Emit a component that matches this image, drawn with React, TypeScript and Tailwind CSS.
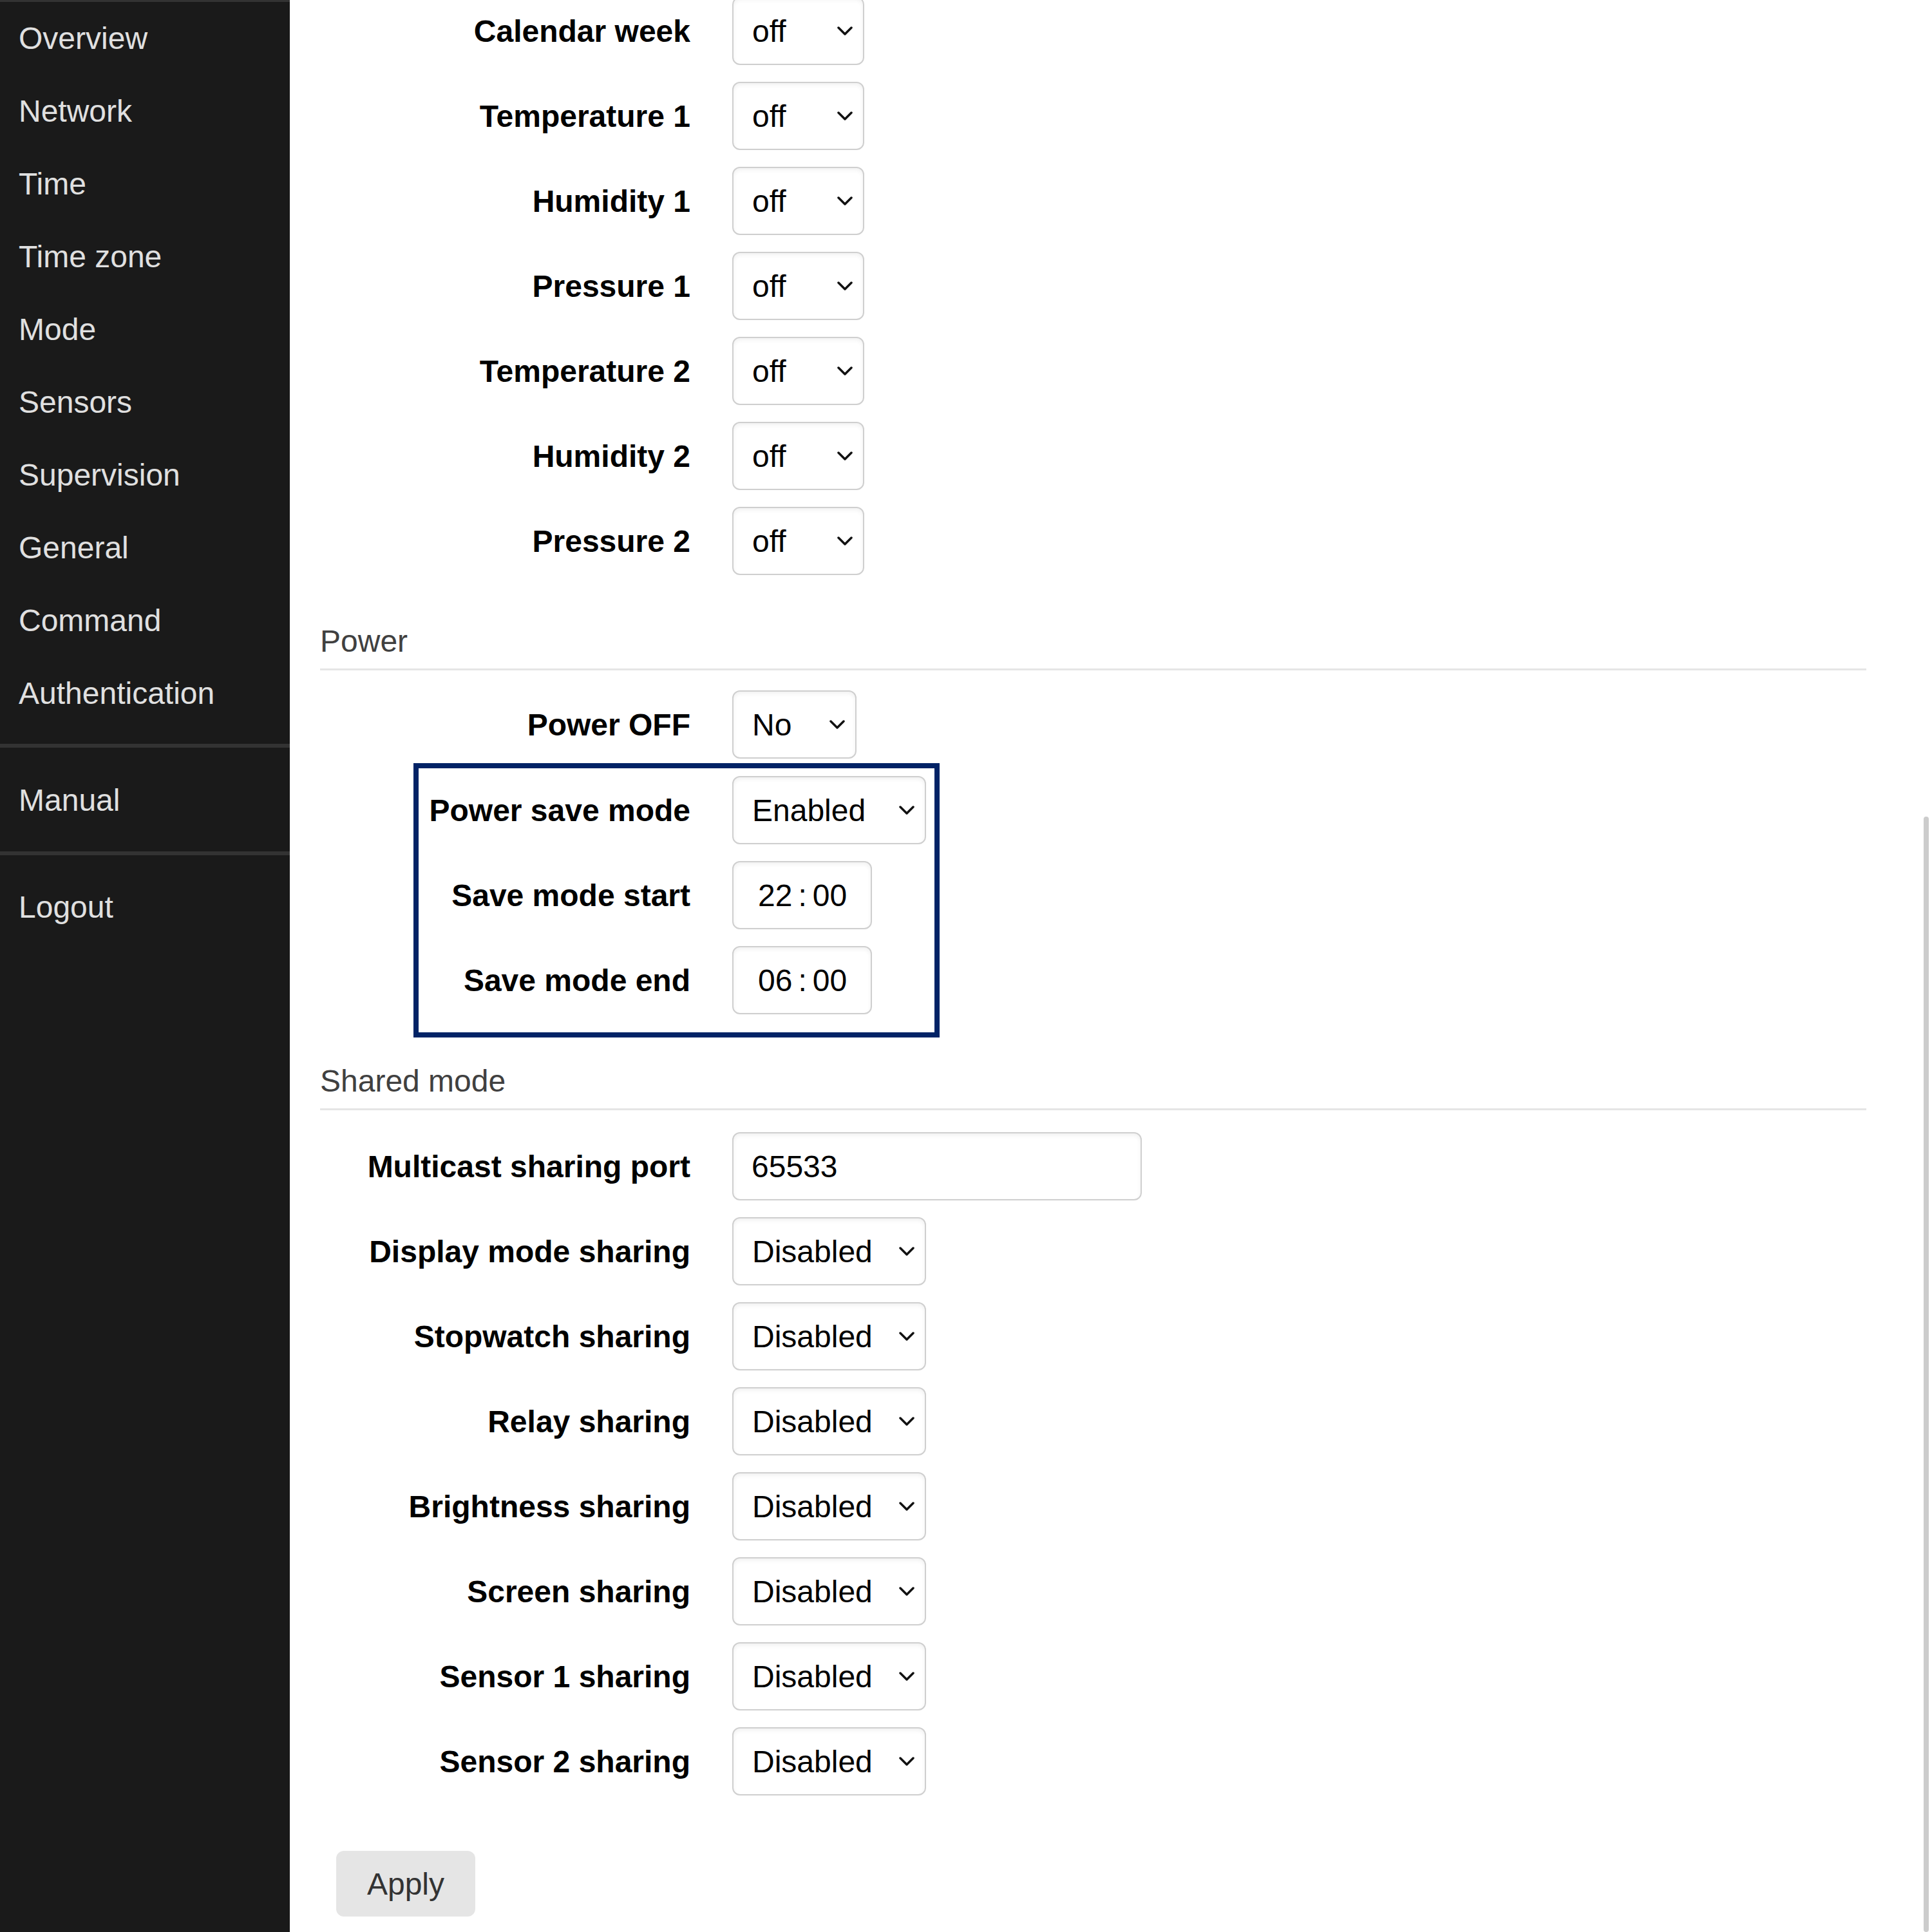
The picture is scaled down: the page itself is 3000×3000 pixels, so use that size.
import React from "react";

const FONT = "font-['Liberation_Sans',Arial,Helvetica,sans-serif]";

function Chevron() {
  return (
    <svg width="24" height="14" viewBox="0 0 24 14" className="shrink-0">
      <polyline points="2,2 12,12 22,2" fill="none" stroke="#111" strokeWidth="3.5" strokeLinecap="round" strokeLinejoin="round" />
    </svg>
  );
}

function Select({ value, width }: { value: string; width: string }) {
  return (
    <div
      className={`${width} h-[106px] shrink-0 flex items-center justify-between pl-[29px] pr-[16px] border-2 border-[#cfcfcf] rounded-[12px] bg-white shadow-[inset_0_3px_6px_rgba(0,0,0,0.06)] text-[48px] leading-[55px] text-black`}
    >
      <span>{value}</span>
      <Chevron />
    </div>
  );
}

function TimeInput({ h, m }: { h: string; m: string }) {
  return (
    <div className="w-[217px] h-[106px] shrink-0 flex items-center gap-[9px] pl-[38px] border-2 border-[#cfcfcf] rounded-[12px] bg-white shadow-[inset_0_3px_6px_rgba(0,0,0,0.06)] text-[48px] leading-[55px] text-black">
      <span>{h}</span>
      <span>:</span>
      <span>{m}</span>
    </div>
  );
}

function TextInput({ value }: { value: string }) {
  return (
    <div className="w-[636px] h-[106px] shrink-0 flex items-center pl-[28px] border-2 border-[#cfcfcf] rounded-[12px] bg-white shadow-[inset_0_3px_6px_rgba(0,0,0,0.06)] text-[48px] leading-[55px] text-black">
      {value}
    </div>
  );
}

function Row({
  label,
  children,
  labelWidth = "w-[575px]",
  mb = "mb-[26px]",
}: {
  label: string;
  children: React.ReactNode;
  labelWidth?: string;
  mb?: string;
}) {
  return (
    <div className={`flex items-center gap-[65px] ${mb}`}>
      <div className={`${labelWidth} shrink-0 text-right font-bold text-[48px] leading-[55px] text-black whitespace-nowrap`}>
        {label}
      </div>
      {children}
    </div>
  );
}

function SectionHeading({ title, mt }: { title: string; mt: string }) {
  return (
    <div className={`${mt} pb-[15px] border-b-[3px] border-[#e5e5e5] text-[48px] leading-[55px] text-[#404040]`}>
      {title}
    </div>
  );
}

const navTop = ["Overview", "Network", "Time", "Time zone", "Mode", "Sensors", "Supervision", "General", "Command", "Authentication"];

function NavItem({ label }: { label: string }) {
  return <div className="px-[29px] py-[29px] text-[48px] leading-[55px] text-[#e0e0e0] whitespace-nowrap">{label}</div>;
}

export default function App() {
  const offRows = ["Calendar week", "Temperature 1", "Humidity 1", "Pressure 1", "Temperature 2", "Humidity 2", "Pressure 2"];
  const sharing = [
    "Display mode sharing",
    "Stopwatch sharing",
    "Relay sharing",
    "Brightness sharing",
    "Screen sharing",
    "Sensor 1 sharing",
    "Sensor 2 sharing",
  ];
  return (
    <div className={`relative flex w-[3000px] h-[3000px] overflow-hidden bg-white ${FONT}`}>
      <aside className="w-[450px] shrink-0 bg-[#1a1a1a] border-t-[3px] border-[#333333]">
        {navTop.map((n) => (
          <NavItem key={n} label={n} />
        ))}
        <div className="h-[6px] bg-[#333333] mt-[22px] mb-[25px]" />
        <NavItem label="Manual" />
        <div className="h-[6px] bg-[#333333] mt-[23px] mb-[24px]" />
        <NavItem label="Logout" />
      </aside>

      <main className="flex-1 pl-[47px] pr-[102px] mt-[-5px]">
        {offRows.map((r) => (
          <Row key={r} label={r}>
            <Select value="off" width="w-[205px]" />
          </Row>
        ))}

        <SectionHeading title="Power" mt="mt-[75px]" />

        <div className="mt-[31px]">
          <Row label="Power OFF" mb="mb-[7px]">
            <Select value="No" width="w-[193px]" />
          </Row>
        </div>

        <div className="ml-[145px] w-[817px] border-[8px] border-[#022366] pt-[12px] pb-[2px]">
          <Row label="Power save mode" labelWidth="w-[422px]">
            <Select value="Enabled" width="w-[301px]" />
          </Row>
          <Row label="Save mode start" labelWidth="w-[422px]">
            <TimeInput h="22" m="00" />
          </Row>
          <Row label="Save mode end" labelWidth="w-[422px]">
            <TimeInput h="06" m="00" />
          </Row>
        </div>

        <SectionHeading title="Shared mode" mt="mt-[40px]" />

        <div className="mt-[34px]">
          <Row label="Multicast sharing port">
            <TextInput value="65533" />
          </Row>
          {sharing.map((s) => (
            <Row key={s} label={s}>
              <Select value="Disabled" width="w-[301px]" />
            </Row>
          ))}
        </div>

        <button className="mt-[60px] ml-[25px] w-[216px] h-[102px] rounded-[12px] bg-[#e5e5e5] text-[#333333] text-[48px] leading-[55px]">
          Apply
        </button>
      </main>

      <div className="absolute right-[5px] top-[1268px] bottom-0 w-[8px] rounded-full bg-[#cccccc]" />
    </div>
  );
}
